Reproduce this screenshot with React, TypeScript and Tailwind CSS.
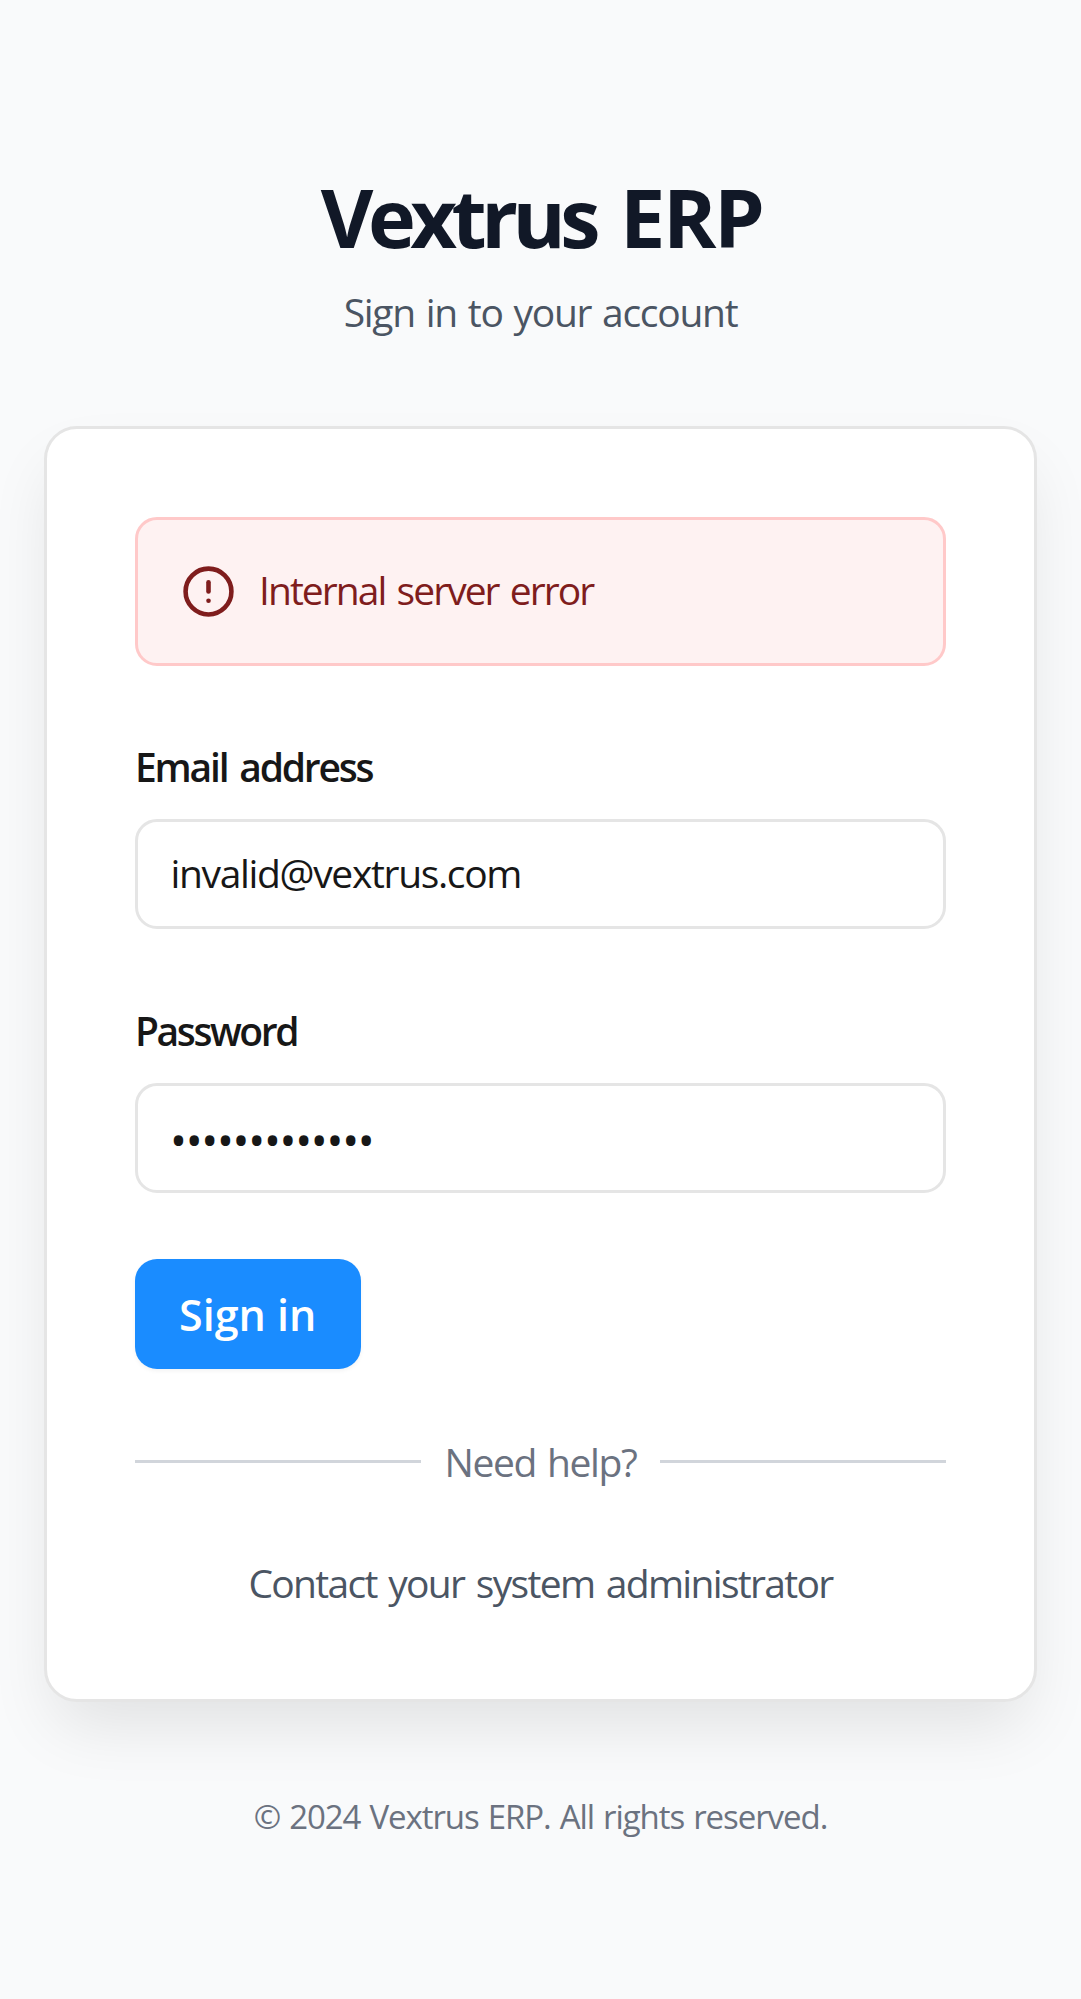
import { useState } from "react";

function AlertIcon() {
  return (
    <svg
      className="size-[55px] shrink-0"
      viewBox="0 0 24 24"
      fill="none"
      stroke="currentColor"
      strokeWidth="2"
      strokeLinecap="round"
      strokeLinejoin="round"
    >
      <circle cx="12" cy="12" r="10" />
      <line x1="12" y1="8" x2="12" y2="12" />
      <line x1="12" y1="16" x2="12.01" y2="16" />
    </svg>
  );
}

const field =
  "mt-[24.3px] block h-[110.3px] w-full rounded-[22px] border-[3px] border-[#e5e5e5] bg-white pr-[31px] text-[#171717] outline-none";

export default function App() {
  const [email, setEmail] = useState("invalid@vextrus.com");
  const [password, setPassword] = useState("wrongpassword");

  return (
    <main className="flex min-h-[1999px] w-full flex-col items-center bg-[#f9fafb] px-[44px] pt-[172px] font-['Open_Sans','Noto_Sans',sans-serif]">
      <h1 className="pl-[2px] whitespace-nowrap text-[81px] leading-[89px] font-bold tracking-[-5.5px] [word-spacing:9.5px] text-[#111827]">
        Vextrus <span className="tracking-[-2.5px]">ERP</span>
      </h1>
      <p className="mt-[19px] whitespace-nowrap text-[39px] leading-[64px] tracking-[-1.28px] [word-spacing:2px] text-[#4b5563]">
        Sign in to your account
      </p>

      <section className="mt-[82px] h-[1276px] w-full rounded-[33px] border-[3px] border-[#e5e5e5] bg-white px-[88px] pt-[88px] shadow-[0_33px_66px_-11px_rgba(0,0,0,0.1)]">
        <div
          role="alert"
          className="flex h-[149px] items-center gap-[23px] rounded-[22px] border-[3px] border-[#ffc9c9] bg-[#fef2f2] px-[43px] text-[#7f1d1d]"
        >
          <AlertIcon />
          <span className="pb-[4px] text-[39px] leading-[54px] tracking-[-1.95px] [word-spacing:3px]">
            Internal server error
          </span>
        </div>

        <form className="mt-[72.8px]" onSubmit={(e) => e.preventDefault()}>
          <label
            htmlFor="email"
            className="block text-[39px] leading-[56px] font-semibold tracking-[-2.2px] [word-spacing:4px] text-[#171717]"
          >
            Email address
          </label>
          <input
            id="email"
            type="email"
            className={`${field} pb-[3px] pl-[32.5px] text-[39px] tracking-[-1.34px]`}
            value={email}
            onChange={(e) => setEmail(e.target.value)}
          />
          <label
            htmlFor="password"
            className="mt-[73.5px] block text-[39px] leading-[56px] font-semibold tracking-[-2.4px] text-[#171717]"
          >
            Password
          </label>
          <input
            id="password"
            type="password"
            className={`${field} pt-[2px] pl-[32px] text-[45px] tracking-[-1.27px]`}
            value={password}
            onChange={(e) => setPassword(e.target.value)}
          />
          <button
            type="submit"
            className="mt-[65.7px] block h-[110.3px] w-[225.5px] rounded-[22px] bg-[#1a8cff] pt-[2px] text-[43px] font-semibold text-white shadow-[0_2px_4px_rgba(0,0,0,0.05)]"
          >
            Sign in
          </button>
        </form>

        <div className="mt-[65.4px] flex h-[53px] items-center">
          <div className="h-[3px] w-[286px] bg-[#d1d5db]" />
          <span className="flex-1 whitespace-nowrap text-center text-[39px] leading-[53px] tracking-[-1.36px] [word-spacing:2px] text-[#6b7280]">
            Need help?
          </span>
          <div className="h-[3px] w-[286px] bg-[#d1d5db]" />
        </div>
        <p className="mt-[68px] whitespace-nowrap text-center text-[39px] leading-[54px] tracking-[-1.68px] [word-spacing:3px] text-[#4b5563]">
          Contact your system administrator
        </p>
      </section>

      <footer className="mt-[92px] whitespace-nowrap text-[33px] leading-[46px] tracking-[-1.06px] [word-spacing:1.5px] text-[#6b7280]">
        © 2024 Vextrus ERP. All rights reserved.
      </footer>
    </main>
  );
}
